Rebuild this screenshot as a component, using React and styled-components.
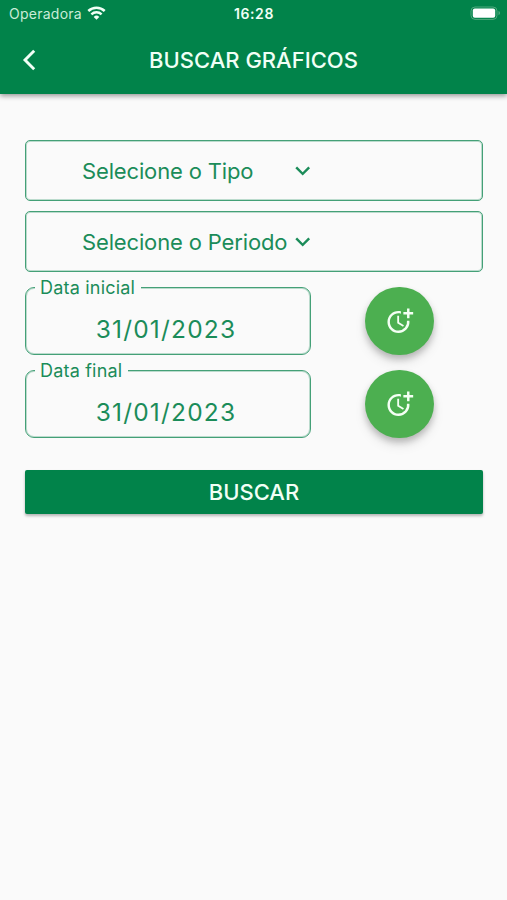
import React, { useState } from "react";
import styled, { createGlobalStyle } from "styled-components";
import { MdExpandMore, MdMoreTime } from "react-icons/md";

const GlobalStyle = createGlobalStyle`
  * {
    box-sizing: border-box;
  }

  body {
    margin: 0;
    background-color: #fafafa;
    font-family: Inter, "Liberation Sans", sans-serif;
  }

  button {
    padding: 0;
    border: none;
    background: none;
    font-family: inherit;
    cursor: pointer;
  }
`;

const Container = styled.div`
  display: flex;
  flex-direction: column;
  width: 100%;
  min-height: 100vh;
  background-color: #fafafa;
`;

const Header = styled.header`
  height: 94px;
  background-color: #01834a;
  color: #f1fff6;
  box-shadow: 0 2px 5px rgba(0, 0, 0, 0.4);
`;

const StatusBar = styled.div`
  display: grid;
  grid-template-columns: 1fr auto 1fr;
  align-items: center;
  height: 27px;
  padding: 0 6px 0 9px;
`;

const Carrier = styled.div`
  display: flex;
  align-items: center;
  gap: 5px;
  font-size: 14px;
  letter-spacing: 0.25px;
  color: #c9ecd8;
`;

const Time = styled.div`
  padding-right: 2px;
  font-size: 14px;
  font-weight: 600;
  letter-spacing: 0.6px;
`;

const Battery = styled.svg`
  justify-self: end;
`;

const AppBar = styled.div`
  display: grid;
  grid-template-columns: 58px 1fr 58px;
  align-items: center;
  height: 67px;
  padding-bottom: 2px;
`;

const BackButton = styled.button`
  display: flex;
  justify-content: center;
  color: inherit;
`;

const Title = styled.h1`
  margin: 0;
  font-size: 22px;
  font-weight: 500;
  line-height: 26px;
  text-align: center;
  white-space: nowrap;
`;

const Form = styled.main`
  display: flex;
  flex-direction: column;
  padding: 46px 24px 0 25px;
`;

const SelectBox = styled.button`
  display: flex;
  align-items: center;
  height: 61px;
  margin-bottom: 10px;
  padding-left: 56px;
  border: 1px solid #44a077;
  border-radius: 5px;
  box-shadow: inset 0 0 0 1px rgba(68, 160, 119, 0.35);
  color: #1b8c59;
`;

const SelectText = styled.span`
  width: 206px;
  font-size: 22px;
  letter-spacing: -0.15px;
  text-align: left;
  white-space: nowrap;
`;

const DateRow = styled.div`
  display: flex;
  justify-content: space-between;
  align-items: flex-start;
  height: 83px;
  padding-right: 49px;
`;

const DateField = styled.fieldset`
  display: flex;
  justify-content: center;
  width: 286px;
  height: 77px;
  margin: -4px 0 0;
  padding: 18px 13px 0 9px;
  border: 1px solid #44a077;
  border-radius: 9px;
  box-shadow: inset 0 0 0 1px rgba(68, 160, 119, 0.35);
  color: #1b8c59;
`;

const DateLabel = styled.legend`
  height: 18px;
  padding: 0 6px 0 5px;
  background-color: #fafafa;
  font-size: 18px;
  line-height: 20px;
  letter-spacing: 0.2px;
`;

const DateValue = styled.span`
  font-size: 24.5px;
  line-height: 30px;
  letter-spacing: 1.2px;
`;

const PickButton = styled.button`
  display: flex;
  justify-content: center;
  align-items: center;
  width: 68.6px;
  height: 68.6px;
  margin-top: 4.6px;
  border-radius: 50%;
  background-color: #4caf50;
  color: #f4fff4;
  box-shadow: 0 4px 6px rgba(0, 0, 0, 0.2), 0 7px 12px rgba(0, 0, 0, 0.1);
`;

const SearchButton = styled.button`
  height: 44px;
  margin-top: 22px;
  border-radius: 2px;
  background-color: #01834a;
  color: #f1fff6;
  font-size: 22px;
  font-weight: 500;
  box-shadow: 0 2px 3px rgba(0, 0, 0, 0.28);
`;

const BackIcon = () => (
  <svg width="14" height="22" viewBox="0 0 14 22" fill="none" stroke="currentColor">
    <path d="M12.2 1.8 3 11l9.2 9.2" strokeWidth="2.9" />
  </svg>
);

const WifiIcon = () => (
  <svg width="19" height="15" viewBox="0 0 19 15" fill="none" stroke="#f1fff6">
    <path d="M1.3 5a11.8 11.8 0 0 1 16.4 0" strokeWidth="2.5" />
    <path d="M4.4 8.4a7.3 7.3 0 0 1 10.2 0" strokeWidth="2.4" />
    <path d="M9.5 13.8 6.7 10.9a4.1 4.1 0 0 1 5.6 0z" fill="#f1fff6" stroke="none" />
  </svg>
);

const BatteryIcon = () => (
  <Battery width="31" height="15" viewBox="0 0 31 15">
    <rect x="1" y="1" width="26" height="12.4" rx="4" fill="none" stroke="#4fa87c" />
    <rect x="2.8" y="2.6" width="22.4" height="9.2" rx="2" fill="#fff" />
    <path d="M28.5 5.1c2 .7 2 3.5 0 4.2z" fill="#4fa87c" />
  </Battery>
);

function Select({ text }) {
  return (
    <SelectBox type="button">
      <SelectText>{text}</SelectText>
      <MdExpandMore size={29.4} />
    </SelectBox>
  );
}

function DateInput({ label, value }) {
  return (
    <DateRow>
      <DateField>
        <DateLabel>{label}</DateLabel>
        <DateValue>{value}</DateValue>
      </DateField>
      <PickButton type="button" aria-label={label}>
        <MdMoreTime size={29.4} />
      </PickButton>
    </DateRow>
  );
}

function App() {
  const [startDate] = useState("31/01/2023");
  const [endDate] = useState("31/01/2023");

  return (
    <>
      <GlobalStyle />
      <Container>
        <Header>
          <StatusBar>
            <Carrier>
              Operadora
              <WifiIcon />
            </Carrier>
            <Time>16:28</Time>
            <BatteryIcon />
          </StatusBar>
          <AppBar>
            <BackButton type="button" aria-label="Voltar">
              <BackIcon />
            </BackButton>
            <Title>BUSCAR GRÁFICOS</Title>
          </AppBar>
        </Header>
        <Form>
          <Select text="Selecione o Tipo" />
          <Select text="Selecione o Periodo" />
          <DateInput label="Data inicial" value={startDate} />
          <DateInput label="Data final" value={endDate} />
          <SearchButton type="button">BUSCAR</SearchButton>
        </Form>
      </Container>
    </>
  );
}

export default App;
